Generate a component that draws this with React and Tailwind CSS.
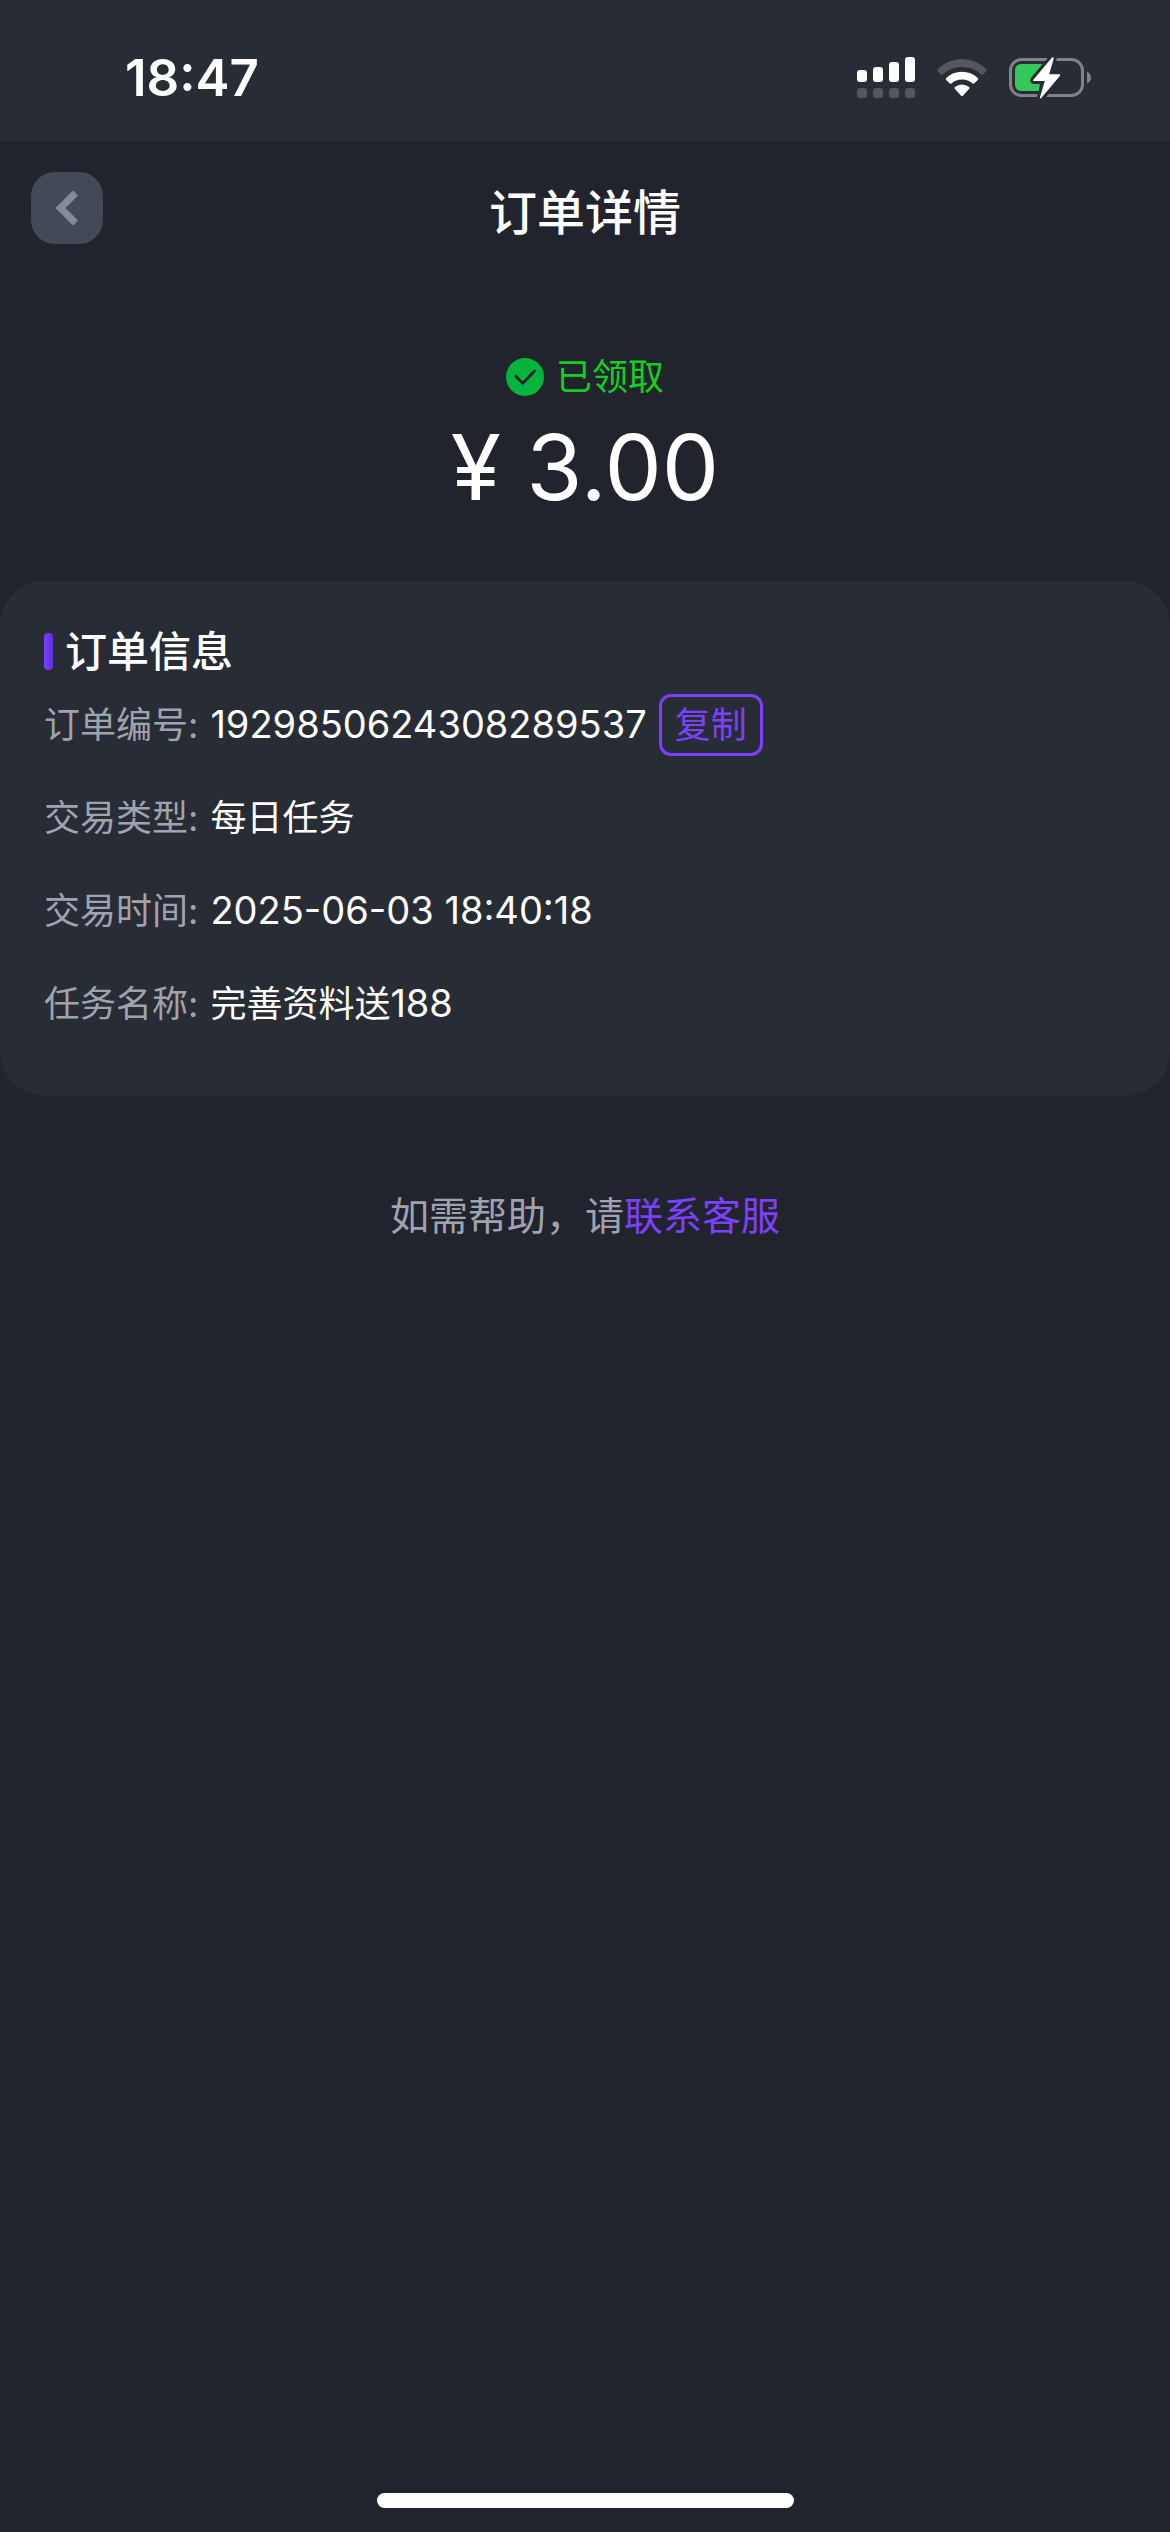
const rows = [
  { label: "订单编号:", number: "1929850624308289537", copy: true },
  { label: "交易类型:", text: "每日任务" },
  { label: "交易时间:", number: "2025-06-03 18:40:18" },
  { label: "任务名称:", text: "完善资料送", number: "188" },
];

function SignalIcon() {
  return (
    <svg className="h-[42px] w-[58px]" viewBox="0 0 58 42" aria-hidden="true">
      <g fill="#fff">
        <rect x="0" y="13" width="10" height="12" rx="3" />
        <rect x="16" y="10" width="10" height="15" rx="3" />
        <rect x="32" y="5" width="10" height="20" rx="3" />
        <rect x="48" y="0" width="10" height="25" rx="3" />
      </g>
      <g fill="#54575e">
        <rect x="0" y="31" width="10" height="10" rx="3" />
        <rect x="16" y="31" width="10" height="10" rx="3" />
        <rect x="32" y="31" width="10" height="10" rx="3" />
        <rect x="48" y="31" width="10" height="10" rx="3" />
      </g>
    </svg>
  );
}

function WifiIcon() {
  return (
    <svg className="h-[38px] w-[50px]" viewBox="0 0 50 38" aria-hidden="true">
      <path
        fill="#54575e"
        d="M.6 10.200A36 36 0 0 1 25 0a36 36 0 0 1 24.400 10.200q.9.900 0 1.800l-3.300 3.400q-.9.900-1.800 0A28 28 0 0 0 25 8 28 28 0 0 0 5.700 15.400q-.9.900-1.800 0L.6 12q-.9-.9 0-1.800z"
      />
      <path
        fill="#fff"
        d="M9.200 19.100A23 23 0 0 1 25 12.700a23 23 0 0 1 15.800 6.400q.9.900 0 1.800l-3.400 3.400q-.9.900-1.800.1A15.500 15.500 0 0 0 25 20.400a15.500 15.500 0 0 0-10.600 4q-.9.800-1.800-.1l-3.400-3.400q-.9-.9 0-1.800z"
      />
      <path
        fill="#fff"
        d="M17.900 28A11 11 0 0 1 25 25.400 11 11 0 0 1 32.100 28q1 .9.100 1.800l-6.300 6.900q-.9.900-1.800 0l-6.300-6.900q-.9-.9.100-1.800z"
      />
    </svg>
  );
}

function BatteryIcon() {
  return (
    <svg className="h-[42px] w-[82px]" viewBox="0 0 82 42" aria-hidden="true">
      <rect x="1.500" y="2.500" width="72" height="36" rx="11" fill="none" stroke="#808288" strokeWidth="3" />
      <path d="M78 14.500q4 2 4 6t-4 6z" fill="#808288" />
      <rect x="6" y="7" width="30" height="27" rx="6" fill="#34c759" />
      <path d="M29 7h14v27H29z" fill="#34c759" />
      <path d="M33 7h20v27H30z" fill="#282c34" />
      <path
        d="M42.800.8 24.600 22.500q-1.100 1.500.6 1.500h10.600L31 40.200q-.6 2.600 1.700.3L50.800 19q1.200-1.700-.7-1.700H40.200L44.600 2q.3-2.600-1.800-1.200z"
        fill="#fff"
        stroke="#282c34"
        strokeWidth="6"
        strokeLinejoin="round"
        paintOrder="stroke"
      />
    </svg>
  );
}

function StatusBar() {
  return (
    <div className="flex h-[141px] items-center justify-between bg-[#282c34] pt-[14px] pr-[79px] pl-[125px]">
      <time className="text-[51px] leading-[60px] font-semibold">18:47</time>
      <div className="flex items-center gap-[22px]">
        <SignalIcon />
        <WifiIcon />
        <BatteryIcon />
      </div>
    </div>
  );
}

function NavBar() {
  return (
    <header className="grid grid-cols-[72px_1fr_72px] items-start px-[31px] pt-[31px]">
      <button
        type="button"
        aria-label="返回"
        className="flex size-[72px] items-center justify-center rounded-[24px] bg-[#434956]"
      >
        <svg className="h-9 w-6" viewBox="0 0 24 36" fill="none" aria-hidden="true">
          <path d="M20.500 3 5.500 18l15 15" stroke="#858a99" strokeWidth="7" />
        </svg>
      </button>
      <h1 className="text-center text-[48px] leading-[81px] font-medium">订单详情</h1>
    </header>
  );
}

function Summary() {
  return (
    <section className="flex flex-col items-center pt-[97px]">
      <p className="flex items-center gap-3 text-[36px] leading-[54px] text-[#13ce24]">
        <svg className="size-[38px]" viewBox="0 0 38 38" fill="none" aria-hidden="true">
          <circle cx="19" cy="19" r="19" fill="#04b43c" />
          <path
            d="m9.800 18.200 7 7L28.500 13"
            stroke="#21242c"
            strokeWidth="2.800"
            strokeLinecap="round"
            strokeLinejoin="round"
          />
        </svg>
        已领取
      </p>
      <p className="text-[91px] leading-[126px]">¥ 3.00</p>
    </section>
  );
}

function OrderInfo() {
  return (
    <section className="mt-[51px] rounded-[45px] bg-[#282c34] px-[44px] pt-[44px] pb-[46px]">
      <h2 className="flex items-center gap-3 text-[42px] leading-[53px] font-medium">
        <span className="h-[37px] w-[9px] rounded-[4px] bg-linear-to-r from-[#7c3fff] to-[#5a32dc]" />
        订单信息
      </h2>
      <dl>
        {rows.map((row) => (
          <div key={row.label} className="flex h-[93px] items-center gap-3 text-[36px] leading-[54px]">
            <dt className="text-[#a0a3ae]">{row.label}</dt>
            <dd className="flex items-center gap-3">
              <span>
                {row.text}
                {row.number && <span className="text-[38px]">{row.number}</span>}
              </span>
              {row.copy && (
                <button
                  type="button"
                  className="rounded-[12px] border-3 border-[#7c40ff] px-[13px] leading-[56px] text-[#7c40ff]"
                >
                  复制
                </button>
              )}
            </dd>
          </div>
        ))}
      </dl>
    </section>
  );
}

export default function App() {
  return (
    <div className="flex min-h-screen flex-col bg-[#21242c] font-['Inter','Noto_Sans_CJK_SC',sans-serif] text-white">
      <StatusBar />
      <NavBar />
      <main>
        <Summary />
        <OrderInfo />
        <p className="mt-[90px] text-center text-[39px] leading-[60px] text-[#a0a3ae]">
          如需帮助，请
          <a href="#support" className="text-[#7c40ff]">
            联系客服
          </a>
        </p>
      </main>
      <div className="mx-auto mt-auto mb-6 h-[15px] w-[417px] rounded-full bg-white" />
    </div>
  );
}
